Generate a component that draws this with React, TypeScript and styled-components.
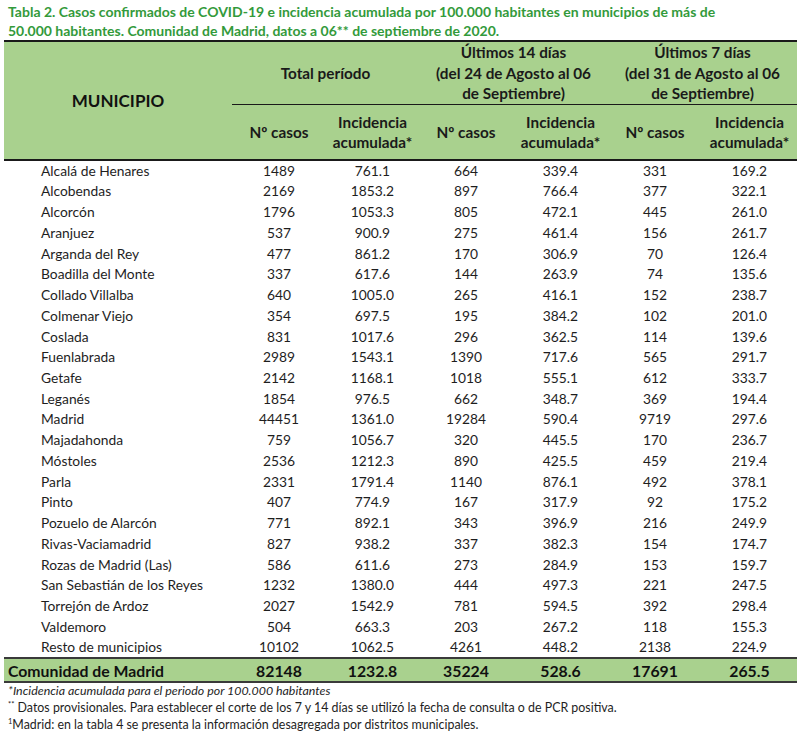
import React from "react";
import styled, { createGlobalStyle } from "styled-components";

const Global = createGlobalStyle`
  html, body { margin: 0; padding: 0; background: #ffffff; }
  body { font-family: Lato, "Open Sans", sans-serif; color: #1e1e1e; }
`;

const Page = styled.div`
  width: 804px;
  height: 734px;
  padding: 3px 7px 0 4px;
  box-sizing: border-box;
  overflow: hidden;
`;

const Title = styled.h1`
  margin: 0 0 0 4px;
  font-size: 14px;
  line-height: 18.5px;
  font-weight: 700;
  color: #339a3b;
  height: 37px;
  white-space: nowrap;
`;

const Table = styled.table`
  width: 793px;
  border-collapse: collapse;
  table-layout: fixed;
  font-size: 13.8px;
`;

const Head = styled.thead`
  background: #a9d18e;
  border-top: 2px solid #1a1a1a;
  border-bottom: 2px solid #1a1a1a;
`;

const HeadRow = styled.tr<{ $h: number }>`
  height: ${(p) => p.$h}px;
`;

const MunicipioTh = styled.th`
  font-size: 17px;
  font-weight: 700;
  text-align: center;
  vertical-align: middle;
  padding: 0;
  color: #111;
`;

const GroupTh = styled.th`
  font-size: 15.3px;
  line-height: 20.5px;
  font-weight: 700;
  text-align: center;
  vertical-align: middle;
  padding: 0;
  color: #1a1a1a;
  white-space: nowrap;
  border-bottom: 1.5px solid #1a1a1a;
`;

const SubTh = styled.th`
  font-size: 15.3px;
  line-height: 20px;
  font-weight: 700;
  text-align: center;
  vertical-align: middle;
  padding: 0;
  color: #1a1a1a;
  white-space: nowrap;
`;

const BodyRow = styled.tr`
  height: 20.74px;
`;

const NameTd = styled.td`
  padding: 0 0 0 37px;
  white-space: nowrap;
  line-height: 20px;
`;

const NumTd = styled.td`
  text-align: center;
  padding: 0;
  line-height: 20px;
`;

const Foot = styled.tfoot`
  background: #a9d18e;
  border-top: 2px solid #3a3a3a;
  border-bottom: 2px solid #3a3a3a;
`;

const TotalRow = styled.tr`
  height: 24px;
`;

const TotalName = styled.td`
  font-weight: 700;
  font-size: 15.8px;
  padding: 1px 0 0 4px;
  color: #111;
  white-space: nowrap;
`;

const TotalNum = styled.td`
  font-weight: 700;
  font-size: 15.8px;
  text-align: center;
  padding: 1px 0 0 0;
  color: #111;
`;

const Notes = styled.div`
  margin: -1px 0 0 4px;
  font-size: 12.4px;
  line-height: 17px;
  color: #1e1e1e;
`;

const Note = styled.div<{ $italic?: boolean }>`
  font-style: ${(p) => (p.$italic ? "italic" : "normal")};
  white-space: nowrap;
`;

const Sup = styled.sup`
  font-size: 7.5px;
  vertical-align: 5px;
  line-height: 0;
`;

type Row = [string, number, string, number, string, number, string];

const rows: Row[] = [
  ["Alcalá de Henares", 1489, "761.1", 664, "339.4", 331, "169.2"],
  ["Alcobendas", 2169, "1853.2", 897, "766.4", 377, "322.1"],
  ["Alcorcón", 1796, "1053.3", 805, "472.1", 445, "261.0"],
  ["Aranjuez", 537, "900.9", 275, "461.4", 156, "261.7"],
  ["Arganda del Rey", 477, "861.2", 170, "306.9", 70, "126.4"],
  ["Boadilla del Monte", 337, "617.6", 144, "263.9", 74, "135.6"],
  ["Collado Villalba", 640, "1005.0", 265, "416.1", 152, "238.7"],
  ["Colmenar Viejo", 354, "697.5", 195, "384.2", 102, "201.0"],
  ["Coslada", 831, "1017.6", 296, "362.5", 114, "139.6"],
  ["Fuenlabrada", 2989, "1543.1", 1390, "717.6", 565, "291.7"],
  ["Getafe", 2142, "1168.1", 1018, "555.1", 612, "333.7"],
  ["Leganés", 1854, "976.5", 662, "348.7", 369, "194.4"],
  ["Madrid", 44451, "1361.0", 19284, "590.4", 9719, "297.6"],
  ["Majadahonda", 759, "1056.7", 320, "445.5", 170, "236.7"],
  ["Móstoles", 2536, "1212.3", 890, "425.5", 459, "219.4"],
  ["Parla", 2331, "1791.4", 1140, "876.1", 492, "378.1"],
  ["Pinto", 407, "774.9", 167, "317.9", 92, "175.2"],
  ["Pozuelo de Alarcón", 771, "892.1", 343, "396.9", 216, "249.9"],
  ["Rivas-Vaciamadrid", 827, "938.2", 337, "382.3", 154, "174.7"],
  ["Rozas de Madrid (Las)", 586, "611.6", 273, "284.9", 153, "159.7"],
  ["San Sebastián de los Reyes", 1232, "1380.0", 444, "497.3", 221, "247.5"],
  ["Torrejón de Ardoz", 2027, "1542.9", 781, "594.5", 392, "298.4"],
  ["Valdemoro", 504, "663.3", 203, "267.2", 118, "155.3"],
  ["Resto de municipios", 10102, "1062.5", 4261, "448.2", 2138, "224.9"],
];

const widths = [228, 94, 93, 94, 95, 94, 95];

export default function App() {
  return (
    <Page>
      <Global />
      <Title>
        Tabla 2. Casos confirmados de COVID-19 e incidencia acumulada por 100.000 habitantes en municipios de más de
        <br />
        50.000 habitantes. Comunidad de Madrid, datos a 06** de septiembre de 2020.
      </Title>
      <Table>
        <colgroup>
          {widths.map((w, i) => (
            <col key={i} style={{ width: w }} />
          ))}
        </colgroup>
        <Head>
          <HeadRow $h={62}>
            <MunicipioTh rowSpan={2}>MUNICIPIO</MunicipioTh>
            <GroupTh colSpan={2}>Total período</GroupTh>
            <GroupTh colSpan={2}>
              Últimos 14 días
              <br />
              (del 24 de Agosto al 06
              <br />
              de Septiembre)
            </GroupTh>
            <GroupTh colSpan={2}>
              Últimos 7 días
              <br />
              (del 31 de Agosto al 06
              <br />
              de Septiembre)
            </GroupTh>
          </HeadRow>
          <HeadRow $h={56}>
            <SubTh>Nº casos</SubTh>
            <SubTh>
              Incidencia
              <br />
              acumulada*
            </SubTh>
            <SubTh>Nº casos</SubTh>
            <SubTh>
              Incidencia
              <br />
              acumulada*
            </SubTh>
            <SubTh>Nº casos</SubTh>
            <SubTh>
              Incidencia
              <br />
              acumulada*
            </SubTh>
          </HeadRow>
        </Head>
        <tbody>
          {rows.map((r) => (
            <BodyRow key={r[0]}>
              <NameTd>{r[0]}</NameTd>
              {r.slice(1).map((v, i) => (
                <NumTd key={i}>{v}</NumTd>
              ))}
            </BodyRow>
          ))}
        </tbody>
        <Foot>
          <TotalRow>
            <TotalName>Comunidad de Madrid</TotalName>
            <TotalNum>82148</TotalNum>
            <TotalNum>1232.8</TotalNum>
            <TotalNum>35224</TotalNum>
            <TotalNum>528.6</TotalNum>
            <TotalNum>17691</TotalNum>
            <TotalNum>265.5</TotalNum>
          </TotalRow>
        </Foot>
      </Table>
      <Notes>
        <Note $italic>*Incidencia acumulada para el periodo por 100.000 habitantes</Note>
        <Note>
          <Sup>**</Sup> Datos provisionales. Para establecer el corte de los 7 y 14 días se utilizó la fecha de consulta o de PCR positiva.
        </Note>
        <Note>
          <Sup>1</Sup>Madrid: en la tabla 4 se presenta la información desagregada por distritos municipales.
        </Note>
      </Notes>
    </Page>
  );
}
